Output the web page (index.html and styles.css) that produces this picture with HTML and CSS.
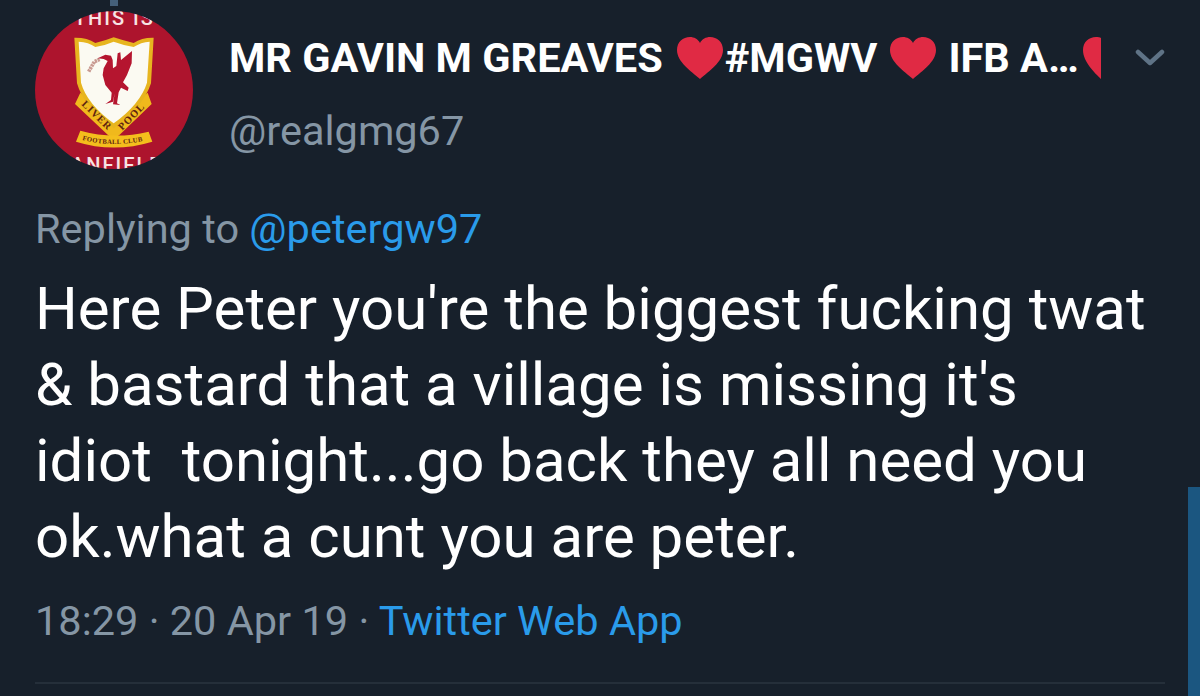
FILE: index.html
```html
<!DOCTYPE html>
<html lang="en">
<head>
<meta charset="utf-8">
<title>Tweet</title>
<link rel="stylesheet" href="styles.css">
</head>
<body>
<main class="tweet">
  <header class="head">
    <div class="avatar">
      <svg viewBox="44 33 474 474" width="158" height="158">
        <defs>
          <clipPath id="c"><circle cx="281" cy="270" r="237"/></clipPath>
          <path id="fc" d="M178 418 Q280 446 394 418"/>
        </defs>
        <g clip-path="url(#c)">
          <rect x="44" y="33" width="474" height="474" fill="#ad142d"/>
          <text class="arc" x="282" y="74" text-anchor="middle">THIS IS</text>
          <text class="arc" x="292" y="516" text-anchor="middle">ANFIELD</text>
          <path d="M180 278 L164 312 L262 404 L280 417 L298 404 L394 312 L382 278 L280 372 Z" fill="#f0b91c"/>
          <path d="M180 392 Q280 420 385 395 L396 425 Q280 460 167 425 Z" fill="#f4be1c"/>
          <path d="M162 113 Q200 112 225 129 Q255 122 280 112 Q310 122 340 129 Q365 112 400 113 L392 250 Q370 320 280 385 Q190 320 170 250 Z" fill="#e7b51f"/>
          <path d="M175 125 Q205 126 225 141 Q255 136 280 125 Q310 136 340 141 Q362 126 388 125 L380 248 Q360 312 280 370 Q200 312 182 248 Z" fill="#fbfaf2"/>
          <path d="M205 215 L222 185 L238 178" fill="none" stroke="#c99b92" stroke-width="11" stroke-dasharray="7 2"/>
          <path d="M232 175 L255 164 L272 167 L277 180 L278 205 L288 198 L292 160 L300 157 L302 180 L335 153 L334 190 L320 225 L308 247 L325 263 L322 273 L302 263 L295 277 L290 310 L300 315 L278 313 L283 280 L278 305 L255 312 L272 300 L274 278 L255 255 L247 225 L250 205 L262 183 L250 177 Z" fill="#b5152f"/>
          <text class="rib" transform="translate(182 314) rotate(44)">LIVER</text>
          <text class="rib" transform="translate(306 392) rotate(-46)">POOL</text>
          <text class="club"><textPath href="#fc" startOffset="8">FOOTBALL CLUB</textPath></text>
        </g>
      </svg>
    </div>
    <div class="who">
      <div class="name-row">
        <span class="name">MR GAVIN M GREAVES</span>
        <svg class="heart h1" viewBox="0 0 46 42" width="46" height="42"><path d="M23 42C14 34 0 25 0 13 0 5 6 0 13 0 17 0 21 2 23 6 25 2 29 0 33 0 40 0 46 5 46 13 46 25 32 34 23 42Z"/></svg>
        <span class="name tag">#MGWV</span>
        <svg class="heart h2" viewBox="0 0 46 42" width="46" height="42"><path d="M23 42C14 34 0 25 0 13 0 5 6 0 13 0 17 0 21 2 23 6 25 2 29 0 33 0 40 0 46 5 46 13 46 25 32 34 23 42Z"/></svg>
        <span class="name tag2">IFB A…</span>
        <svg class="heart h3" viewBox="0 0 18 42" width="18" height="42"><path d="M18 42C12 36 0 25 0 13 0 5 6 0 13 0 15 0 17 0 18 1Z"/></svg>
        <svg class="chev" viewBox="0 0 30 18" width="30" height="18"><path d="M3 3 L15 14 L27 3"/></svg>
      </div>
      <div class="handle">@realgmg67</div>
    </div>
  </header>
  <p class="reply">Replying to <a class="link">@petergw97</a></p>
  <p class="text">Here Peter you're the biggest fucking twat<br>&amp; bastard that a village is missing it's<br>idiot&nbsp; tonight...go back they all need you<br>ok.what a cunt you are peter.</p>
  <p class="meta">18:29 · 20 Apr 19 · <a class="link">Twitter Web App</a></p>
  <div class="rule"></div>
</main>
<div class="blip"></div>
<div class="strip"></div>
</body>
</html>
```
FILE: styles.css
```css
* { box-sizing: border-box; }
html, body { margin: 0; height: 100%; }
body {
  background: #17202b;
  font-family: Roboto, "Liberation Sans", sans-serif;
  color: #fff;
  overflow: hidden;
  position: relative;
}
.tweet { padding: 11px 0 0 35px; width: 1200px; height: 696px; }
.head { display: flex; gap: 36px; }
.avatar { width: 158px; height: 158px; flex: none; }
.avatar svg { display: block; }
.arc { font: 500 60px Roboto, sans-serif; fill: #f7e4e4; letter-spacing: 6px; }
.rib { font: 700 31px "Liberation Serif", serif; fill: #5e2410; letter-spacing: 3px; }
.club { font: 700 20px "Liberation Serif", serif; fill: #5e2410; letter-spacing: 1px; }
.who { padding-top: 23px; flex: 1; }
.name-row { display: flex; align-items: center; height: 48px; }
.name { font-weight: 700; font-size: 41.5px; line-height: 48px; white-space: nowrap; }
.heart { flex: none; fill: #e02a44; }
.h1 { margin-left: 14px; }
.tag { margin-left: 2px; }
.h2 { margin-left: 13px; }
.tag2 { margin-left: 12px; }
.h3 { margin-left: 4px; }
.chev { margin-left: 34px; fill: none; stroke: #5f7386; stroke-width: 4.5; stroke-linecap: round; stroke-linejoin: round; }
.handle { font-size: 41.5px; color: #8596a5; margin-top: 25px; line-height: 48px; }
.reply { font-size: 41.5px; line-height: 48px; color: #8596a5; margin: 36px 0 0; }
.link { color: #2a9bea; }
.text { font-size: 60px; line-height: 76px; margin: 18px 0 0; white-space: nowrap; }
.meta { font-size: 41.5px; line-height: 48px; color: #8596a5; margin: 22px 0 0; }
.rule { height: 2px; background: #252f3a; width: 1130px; margin-top: 37px; }
.blip { position: absolute; left: 110px; top: 0; width: 8px; height: 6px; background: #45607a; }
.strip { position: absolute; right: 0; bottom: 0; width: 12px; height: 209px; background: #1b5680; }
```
